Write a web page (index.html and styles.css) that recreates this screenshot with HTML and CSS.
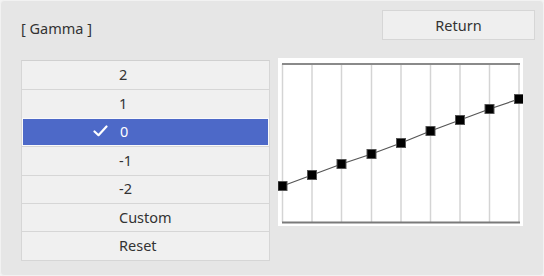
FILE: index.html
```html
<!DOCTYPE html>
<html lang="en">
<head>
    <meta charset="UTF-8">
    <meta name="viewport" content="width=device-width, initial-scale=1.0">
    <title>Gamma</title>
    <link rel="stylesheet" href="styles.css">
</head>
<body>
    <div class="panel">
        <div class="top">
            <div class="title">[ Gamma ]</div>
            <button class="return" type="button">Return</button>
        </div>
        <div class="main">
            <ul class="list">
                <li class="row">2</li>
                <li class="row">1</li>
                <li class="row selected">
                    <svg class="check" width="15" height="12" viewBox="0 0 15 12">
                        <polyline points="1.5,6.5 5.5,10.2 13.5,1.5" fill="none" stroke="#fff" stroke-width="2.2" stroke-linecap="round" stroke-linejoin="round"/>
                    </svg>0
                </li>
                <li class="row">-1</li>
                <li class="row">-2</li>
                <li class="row">Custom</li>
                <li class="row">Reset</li>
            </ul>
            <div class="chart">
                <svg width="245" height="168" viewBox="0 0 245 168">
                    <g stroke="#d4d4d4" stroke-width="1.5">
                        <line x1="4.5" y1="6" x2="4.5" y2="164"/>
                        <line x1="34" y1="6" x2="34" y2="164"/>
                        <line x1="63.5" y1="6" x2="63.5" y2="164"/>
                        <line x1="93.5" y1="6" x2="93.5" y2="164"/>
                        <line x1="123" y1="6" x2="123" y2="164"/>
                        <line x1="152.5" y1="6" x2="152.5" y2="164"/>
                        <line x1="182" y1="6" x2="182" y2="164"/>
                        <line x1="211.5" y1="6" x2="211.5" y2="164"/>
                        <line x1="241" y1="6" x2="241" y2="164"/>
                    </g>
                    <line x1="4" y1="6" x2="242" y2="6" stroke="#8a8a8a" stroke-width="2"/>
                    <line x1="4" y1="164.5" x2="242" y2="164.5" stroke="#7a7a7a" stroke-width="2"/>
                    <polyline points="4.5,128 34,117 63.5,106 93.5,96 123,85 152.5,73 182,62 211.5,51 241,41" fill="none" stroke="#555" stroke-width="1.2"/>
                    <g fill="#000" stroke="#555" stroke-width="1">
                        <rect x="0" y="123.5" width="9" height="9"/>
                        <rect x="29.5" y="112.5" width="9" height="9"/>
                        <rect x="59" y="101.5" width="9" height="9"/>
                        <rect x="89" y="91.5" width="9" height="9"/>
                        <rect x="118.5" y="80.5" width="9" height="9"/>
                        <rect x="148" y="68.5" width="9" height="9"/>
                        <rect x="177.5" y="57.5" width="9" height="9"/>
                        <rect x="207" y="46.5" width="9" height="9"/>
                        <rect x="236.5" y="36.5" width="9" height="9"/>
                    </g>
                </svg>
            </div>
        </div>
    </div>
</body>
</html>
```

FILE: styles.css
```css
* {
    box-sizing: border-box;
}
body {
    margin: 0;
    font-family: 'Noto Sans', 'Open Sans', sans-serif;
    font-size: 14.5px;
    color: #333;
    background-color: #f4f4f4;
}
.panel {
    width: 544px;
    height: 276px;
    background-color: #e6e6e6;
    border: 1px solid #f2f2f2;
    border-radius: 4px;
}
.top {
    display: flex;
    justify-content: space-between;
    align-items: flex-start;
    padding: 9px 8px 0 20px;
}
.title {
    margin-top: 8px;
    line-height: 20px;
}
.return {
    width: 153px;
    height: 30px;
    background-color: #efefef;
    border: 1px solid #d6d6d6;
    font-family: inherit;
    font-size: 14.5px;
    color: #333;
    padding: 0 0 1px;
}
.main {
    display: flex;
    align-items: flex-start;
    gap: 8px;
    padding: 20px 0 0 20px;
}
.list {
    list-style: none;
    margin: 0;
    padding: 0;
    width: 249px;
    border: 1px solid #d6d6d6;
    border-top-color: #d0d0d0;
}
.row {
    height: 28.4px;
    display: flex;
    align-items: center;
    padding-left: 97px;
    padding-bottom: 2px;
    background-color: #f0f0f0;
    border-top: 1px solid #d6d6d6;
}
.row:first-child {
    border-top: none;
}
.selected {
    background-color: #4d69c8;
    color: #fff;
    border: 1px solid #fafafa;
    border-top: 1px solid #fafafa;
}
.check {
    margin-left: -27px;
    margin-right: 12px;
}
.chart {
    width: 245px;
    height: 168px;
    margin-top: -2px;
    background-color: #fff;
}
.chart svg {
    display: block;
}
```
